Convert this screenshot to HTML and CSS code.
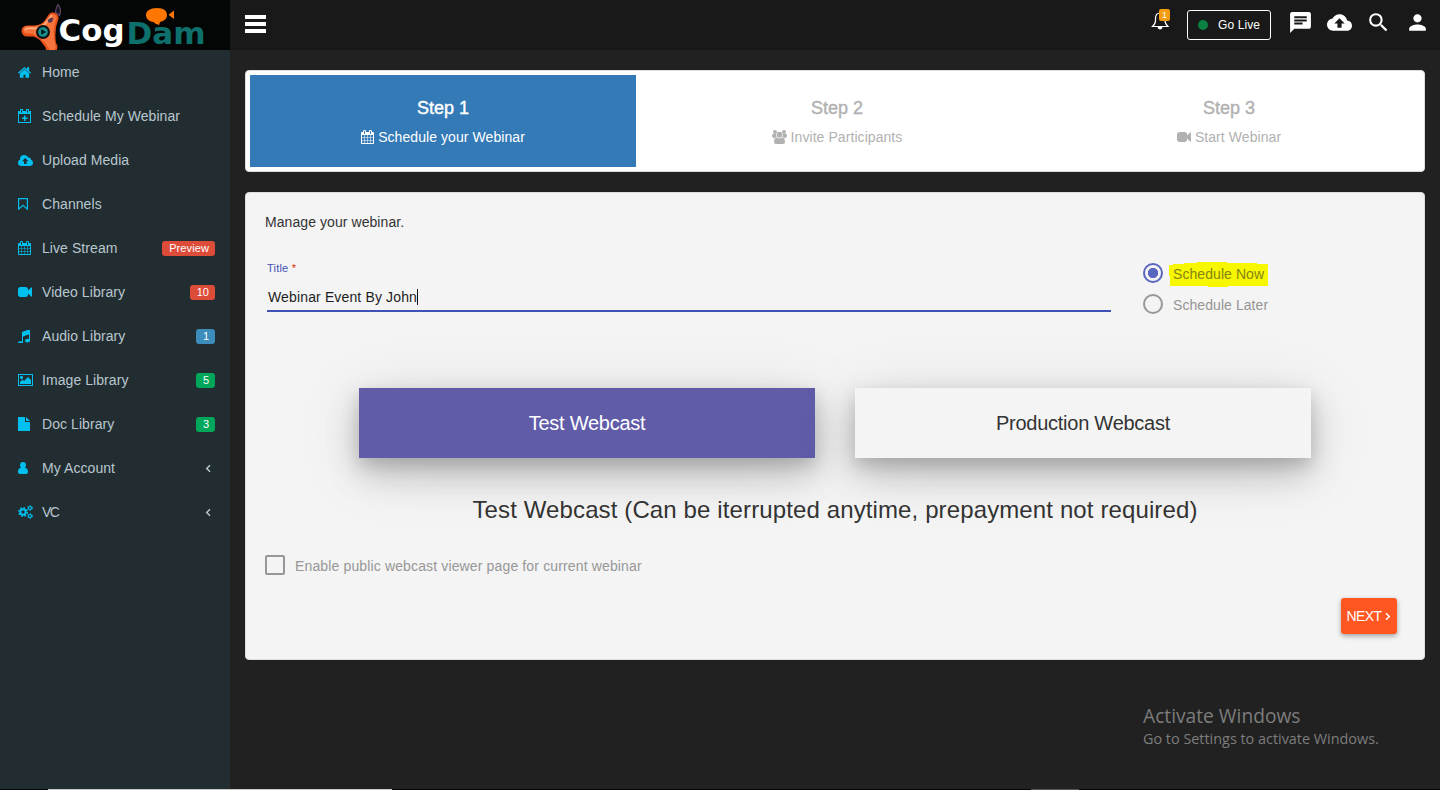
FILE: index.html
```html
<!DOCTYPE html>
<html lang="en">
<head>
<meta charset="utf-8">
<title>CogDam - Schedule Webinar</title>
<link rel="stylesheet" href="styles.css">
</head>
<body>
<svg class="defs" width="0" height="0">
  <symbol id="calendar" viewBox="64 0 1664 1792"><path d="M192 1664h288v-288h-288v288zm352 0h320v-288h-320v288zm-352-352h288v-320h-288v320zm352 0h320v-320h-320v320zm-352-384h288v-288h-288v288zm736 736h320v-288h-320v288zm-384-736h320v-288h-320v288zm768 736h288v-288h-288v288zm-384-352h320v-320h-320v320zm-352-864v-288q0-13-9.500-22.500t-22.500-9.500h-64q-13 0-22.500 9.500t-9.500 22.500v288q0 13 9.500 22.500t22.500 9.500h64q13 0 22.500-9.500t9.500-22.500zm736 864h288v-320h-288v320zm-384-384h320v-288h-320v288zm384 0h288v-288h-288v288zm32-480v-288q0-13-9.500-22.500t-22.500-9.500h-64q-13 0-22.500 9.500t-9.500 22.500v288q0 13 9.500 22.500t22.500 9.500h64q13 0 22.500-9.500t9.500-22.500zm384-64v1280q0 52-38 90t-90 38h-1408q-52 0-90-38t-38-90v-1280q0-52 38-90t90-38h128v-96q0-66 47-113t113-47h64q66 0 113 47t47 113v96h384v-96q0-66 47-113t113-47h64q66 0 113 47t47 113v96h128q52 0 90 38t38 90z"/></symbol>
  <symbol id="video" viewBox="0 128 1792 1536"><path d="M1792 352v1088q0 42-39 59-13 5-25 5-27 0-45-19l-403-403v166q0 119-84.500 203.500t-203.500 84.500h-704q-119 0-203.500-84.500t-84.500-203.500v-704q0-119 84.500-203.500t203.500-84.500h704q119 0 203.500 84.500t84.500 203.500v165l403-402q18-19 45-19 12 0 25 5 39 17 39 59z"/></symbol>
  <symbol id="chevron" viewBox="0 0 6 9"><path d="M5 1.200 1.700 4.500 5 7.800" fill="none" stroke="currentColor" stroke-width="1.500"/></symbol>
  <symbol id="cloud" viewBox="0 0 24 24"><path d="M19.350 10.040C18.670 6.590 15.640 4 12 4 9.110 4 6.600 5.640 5.350 8.040 2.340 8.360 0 10.910 0 14c0 3.310 2.690 6 6 6h13c2.760 0 5-2.240 5-5 0-2.640-2.050-4.780-4.650-4.960zM14 13v4h-4v-4H7l5-5 5 5h-3z"/></symbol>
</svg>
<div class="app">
  <aside class="sidebar">
    <div class="logo">
      <svg width="230" height="50" viewBox="0 0 230 50">
        <path d="M58 4.500q4 5 1.500 11l-4-3q0-4 2.500-8z" fill="#17121f" stroke="#60496b" stroke-width="1.200"/>
        <g fill="none" stroke-linecap="round" stroke-linejoin="round">
          <path d="M27 31h8q10-1 14-7l4-6M35 31q8 3 11 8l6 8M53 18q-5 12-2 29" stroke="#e8501a" stroke-width="11"/>
          <path d="M27 30h8q9-1 13-7l5-5M36 32q7 3 11 8l5 7M53 18q-5 12-1 29" stroke="#f7743c" stroke-width="7"/>
          <path d="M25.500 29.500q2-2 8-1 7 0 12-5l6-8" stroke="#ffae7c" stroke-width="1.800"/>
        </g>
        <path d="M47.500 21q2-4 6-3l-1.500 4q-3 2-4.500-1z" fill="#59394e"/>
        <circle cx="43" cy="32" r="7" fill="#101414"/><circle cx="43" cy="32" r="4.800" fill="#149391"/><path d="M41.200 29.300v5.400l5-2.700z" fill="#061313"/>
        <text class="logo-cog" x="58.500" y="41" textLength="66" lengthAdjust="spacingAndGlyphs">Cog</text>
        <text class="logo-dam" x="126.500" y="43.500" textLength="79" lengthAdjust="spacingAndGlyphs">Dam</text>
        <path d="M157 8c7 0 10 3 10 7 0 3.500-2.500 6-7 7l-1 3q-4-1-5.500-3c-4.500-.7-7.500-3.200-7.500-7 0-4 4-7 11-7zM174 10.500v8.500l-5.500-4.300z" fill="#ff7700"/>
      </svg>
    </div>
    <nav class="menu">
      <a class="item"><svg class="ico" width="13" height="11" viewBox="88 220 1616 1340" preserveAspectRatio="none"><path d="M1472 992v480q0 26-19 45t-45 19h-384v-384h-256v384h-384q-26 0-45-19t-19-45v-480q0-1 .5-3t.5-3l575-474 575 474q1 2 1 6zm223-69l-62 74q-8 9-21 11h-3q-13 0-21-7l-692-577-692 577q-12 8-24 7-13-2-21-11l-62-74q-8-10-7-23.500t11-21.500l719-599q32-26 76-26t76 26l244 204v-195q0-14 9-23t23-9h192q14 0 23 9t9 23v408l219 182q10 8 11 21.500t-7 23.500z"/></svg><span class="name">Home</span></a>
      <a class="item"><svg class="ico" width="13" height="14" viewBox="0 0 13 14"><path fill-rule="evenodd" d="M0 2h2V0h3v2h3V0h3v2h2v12H0zm1 3v8h11V5zM3 1v2.500h1V1zm6 0v2.500h1V1zM6 6.500h1.500V8.500h2V10h-2v2H6v-2H4V8.500h2z"/></svg><span class="name">Schedule My Webinar</span></a>
      <a class="item"><svg class="ico" width="15" height="11" viewBox="0 0 15 11"><path fill-rule="evenodd" d="M3.500 11Q0 11 0 7.700 0 5.300 2 4.400 2 0 6.300 0q3 0 4 2.500 2.400-.4 2.700 2.200Q15 5.300 15 7.700 15 11 11.500 11zM6 9h2.500V6.200h2L7.200 3 4 6.200h2z"/></svg><span class="name">Upload Media</span></a>
      <a class="item"><svg class="ico" width="10" height="12" viewBox="0 0 10 12"><path d="M.6.600h8.800v10.500L5 7.300.6 11.100z" fill="none" stroke="currentColor" stroke-width="1.200"/></svg><span class="name">Channels</span></a>
      <a class="item"><svg class="ico" width="13" height="14"><use href="#calendar"/></svg><span class="name">Live Stream</span><span class="badge red wide">Preview</span></a>
      <a class="item"><svg class="ico" width="14" height="12"><use href="#video"/></svg><span class="name">Video Library</span><span class="badge red">10</span></a>
      <a class="item"><svg class="ico" width="12" height="13" viewBox="128 192 1536 1408" preserveAspectRatio="none"><path d="M1664 224v1120q0 50-34 89t-86 60.500-103.500 32-96.500 10.500-96.500-10.500-103.500-32-86-60.500-34-89 34-89 86-60.500 103.500-32 96.500-10.500q105 0 192 39v-537l-768 237v709q0 50-34 89t-86 60.500-103.500 32-96.500 10.500-96.500-10.500-103.500-32-86-60.500-34-89 34-89 86-60.500 103.500-32 96.500-10.500q105 0 192 39v-967q0-31 19-56.500t49-35.500l832-256q12-4 28-4 40 0 68 28t28 68z"/></svg><span class="name">Audio Library</span><span class="badge blue">1</span></a>
      <a class="item"><svg class="ico" width="15" height="12" viewBox="0 0 15 12"><path fill-rule="evenodd" d="M0 0h15v12H0zM1 1v10h13V1z"/><path d="M2 10V8l2.500-2.500L6 7l4-4 3 3v4z"/><rect x="2" y="2" width="3" height="3" rx="1.300"/></svg><span class="name">Image Library</span><span class="badge green">5</span></a>
      <a class="item"><svg class="ico" width="12" height="14" viewBox="0 0 12 14"><path d="M0 0h7v5h5v9H0z"/><path d="M8 0v4h4z"/></svg><span class="name">Doc Library</span><span class="badge green">3</span></a>
      <a class="item"><svg class="ico" width="10" height="12" viewBox="0 0 10 12"><path d="M5 0c2 0 3 1.300 3 3 0 1-.4 2-.9 2.700C9 6 10 7.500 10 9.700 10 11 9.300 12 8 12H2c-1.300 0-2-1-2-2.300C0 7.500 1 6 2.900 5.700 2.400 5 2 4 2 3c0-1.700 1-3 3-3z"/></svg><span class="name">My Account</span><svg class="chev" width="6" height="9"><use href="#chevron"/></svg></a>
      <a class="item"><svg class="ico" width="15" height="14" viewBox="0 0 15 14"><g fill="none" stroke="currentColor"><circle cx="5" cy="7" r="2.700" stroke-width="1.900"/><circle cx="5" cy="7" r="4.200" stroke-width="1.600" stroke-dasharray="1.650 1.650"/><circle cx="12" cy="3" r="1.500" stroke-width="1.200"/><circle cx="12" cy="3" r="2.400" stroke-width="1" stroke-dasharray="1.250 1.250"/><circle cx="12" cy="11" r="1.500" stroke-width="1.200"/><circle cx="12" cy="11" r="2.400" stroke-width="1" stroke-dasharray="1.250 1.250"/></g></svg><span class="name tight">VC</span><svg class="chev" width="6" height="9"><use href="#chevron"/></svg></a>
    </nav>
  </aside>
  <div class="page">
    <header class="topbar">
      <div class="burger"><i></i><i></i><i></i></div>
      <div class="tools">
        <div class="bell"><svg width="18" height="20" viewBox="0 0 18 20"><path d="M1.500 16.500Q4.500 14 4.500 10.500V8.500C4.500 5 6 3 9 3s5 2 5 5.500v2q0 3.500 3 6z" fill="none" stroke="#fff" stroke-width="1.200"/><path d="M9 3V1.500" stroke="#fff"/><path d="M6.500 17h5a2.500 2.500 0 0 1-5 0z" fill="#fff"/></svg><b class="count">1</b></div>
        <div class="golive"><i class="dot"></i><span>Go Live</span></div>
        <svg class="tool" width="25" height="25" viewBox="0 0 24 24"><path d="M20 2H4c-1.100 0-1.990.9-1.990 2L2 22l4-4h14c1.100 0 2-.9 2-2V4c0-1.100-.9-2-2-2zM6 9h12v2H6V9zm8 5H6v-2h8v2zm4-6H6V6h12v2z"/></svg>
        <svg class="tool" width="25" height="25"><use href="#cloud"/></svg>
        <svg class="tool" width="25" height="25" viewBox="0 0 24 24"><path d="M15.500 14h-.79l-.28-.27A6.471 6.471 0 0 0 16 9.500 6.500 6.500 0 1 0 9.500 16c1.610 0 3.090-.59 4.230-1.570l.27.28v.79l5 4.990L20.490 19l-4.990-5zm-6 0C7.010 14 5 11.990 5 9.500S7.010 5 9.500 5 14 7.010 14 9.500 11.990 14 9.500 14z"/></svg>
        <svg class="tool" width="25" height="25" viewBox="0 0 24 24"><path d="M12 12c2.210 0 4-1.790 4-4s-1.790-4-4-4-4 1.790-4 4 1.790 4 4 4zm0 2c-2.670 0-8 1.340-8 4v2h16v-2c0-2.660-5.330-4-8-4z"/></svg>
      </div>
    </header>
    <main class="content">
      <section class="steps">
        <div class="step active"><h4>Step 1</h4><p><svg width="13" height="14"><use href="#calendar"/></svg><span>Schedule your Webinar</span></p></div>
        <div class="step"><h4>Step 2</h4><p><svg width="15" height="14" viewBox="0 0 15 14"><circle cx="3" cy="2" r="2"/><circle cx="12" cy="2" r="2"/><circle cx="7.500" cy="4.700" r="2.900"/><path d="M0 5q0-1 1-1h3q-.3 2 .8 3.200-2 0-3 1.300Q0 8 0 5zM15 5q0-1-1-1h-3q.3 2-.8 3.200 2 0 3 1.300Q15 8 15 5zM4.500 7.500q3 1.700 6 0Q13 8 13 12q0 2-2 2H4q-2 0-2-2 0-4 2.500-4.500z"/></svg><span>Invite Participants</span></p></div>
        <div class="step"><h4>Step 3</h4><p><svg width="14" height="12"><use href="#video"/></svg><span>Start Webinar</span></p></div>
      </section>
      <section class="panel">
        <p class="lead">Manage your webinar.</p>
        <div class="form">
          <div class="field">
            <label class="label">Title <em>*</em></label>
            <div class="input"><span>Webinar Event By John</span><i class="caret"></i></div>
          </div>
          <div class="radios">
            <div class="radio on"><i class="ring"></i><span class="marked"><svg class="marker" width="99" height="25" viewBox="0 0 99 25"><path d="M0 3h4V2h11V1h13V0h30v1h30v1h11v22H85v-1 1H59v1H39v-1H15v-1 1H1v-10H0z" fill="#f7f700"/></svg><span class="text">Schedule Now</span></span></div>
            <div class="radio"><i class="ring"></i><span>Schedule Later</span></div>
          </div>
        </div>
        <div class="modes">
          <div class="mode selected">Test Webcast</div>
          <div class="mode">Production Webcast</div>
        </div>
        <h3 class="note">Test Webcast (Can be iterrupted anytime, prepayment not required)</h3>
        <div class="check"><i class="box"></i><span>Enable public webcast viewer page for current webinar</span></div>
        <div class="actions"><div class="next"><span>NEXT</span><svg width="6" height="9" viewBox="0 0 6 9"><path d="m1 1.200 3.300 3.300L1 7.800" fill="none" stroke="#fff" stroke-width="1.500"/></svg></div></div>
      </section>
    </main>
  </div>
</div>
<div class="watermark"><div class="wm-title">Activate Windows</div><div class="wm-text">Go to Settings to activate Windows.</div></div>
<div class="taskline"><i class="light"></i><i class="dim"></i></div>
</body>
</html>
```
FILE: styles.css
```css
* { box-sizing: border-box; }
body { margin: 0; background: #212121; font: 14px/20px "Liberation Sans", Arial, sans-serif; letter-spacing: .07px; color: #333; overflow: hidden; }
h3, h4, p { margin: 0; font-weight: 400; }
svg { fill: currentColor; display: block; flex: none; }
.defs { position: absolute; }
.app { display: flex; height: 790px; }

.sidebar { width: 230px; flex: none; background: #222d32; color: #b8c7ce; }
.logo { height: 50px; background: #040606; }
.logo-cog { font: bold 31px "DejaVu Sans", sans-serif; fill: #fff; letter-spacing: 0; }
.logo-dam { font: bold 30px "DejaVu Sans", sans-serif; fill: #0d706c; letter-spacing: 0; }
.item { display: grid; grid-template-columns: 24px 1fr auto; align-items: center; height: 44px; padding: 0 15px 0 18px; }
.ico { color: #00c0ef; }
.tight { letter-spacing: -1.500px; }
.badge { height: 15px; padding: 0 6px 0 7px; border-radius: 3px; font-size: 11px; line-height: 15px; color: #fff; letter-spacing: 0; }
.wide { letter-spacing: .1px; }
.red { background: #dd4b39; }
.blue { background: #3c8dbc; }
.green { background: #00a65a; }
.chev { margin-right: 4px; }

.page { flex: 1; display: flex; flex-direction: column; }
.topbar { height: 50px; background: #191919; display: flex; justify-content: space-between; align-items: flex-start; padding: 0 10px 0 15px; color: #fff; }
.burger { display: grid; gap: 3px; padding-top: 15px; }
.burger i { width: 21px; height: 4px; background: #fff; }
.tools { display: flex; gap: 14px; padding-top: 10px; }
.bell { position: relative; width: 18px; height: 20px; margin-right: 4px; }
.count { position: absolute; left: 8px; top: -1px; width: 11px; height: 12px; border-radius: 2px; background: #f39c12; font: 9px/12px "Liberation Sans", sans-serif; text-align: center; letter-spacing: 0; }
.golive { width: 84px; height: 30px; margin-right: 3px; border: 1px solid #fff; border-radius: 3px; display: flex; align-items: center; gap: 10px; padding-left: 10px; font-size: 12px; letter-spacing: .1px; }
.dot { width: 10px; height: 10px; border-radius: 50%; background: #0a8043; }

.content { padding: 20px 15px; display: grid; gap: 20px; }
.steps { height: 102px; padding: 4px; background: #fff; border: 1px solid #ddd; border-radius: 4px; display: grid; grid-template-columns: 386px 402px 1fr; }
.step { padding-top: 23px; text-align: center; color: #b1b1b1; }
.step h4 { font-size: 18px; line-height: 20px; -webkit-text-stroke: .4px; letter-spacing: 0; }
.step p { display: flex; justify-content: center; align-items: center; gap: 4px; margin-top: 9px; }
.active { background: #337ab7; color: #fff; }

.panel { height: 468px; padding: 19px 19px 0; background: #f4f4f4; border: 1px solid #ddd; border-radius: 4px; }
.form { display: grid; grid-template-columns: 844px 1fr; gap: 32px; padding: 28px 0 0 2px; }
.label { display: block; font-size: 11px; line-height: 16px; color: #3f51b5; letter-spacing: .2px; }
.label em { color: #dd2c00; font-style: normal; }
.input { height: 36px; display: flex; align-items: center; padding: 8px 0 0 1px; border-bottom: 2px solid #3f51b5; color: #1e1e1e; letter-spacing: .14px; }
.caret { width: 1px; height: 16px; background: #111; }
.radios { display: grid; gap: 11px; padding-top: 3px; align-content: start; color: #959595; }
.radio { display: flex; align-items: center; gap: 10px; height: 20px; }
.ring { width: 20px; height: 20px; border: 2px solid #979797; border-radius: 50%; }
.on .ring { border-color: #5967be; background: radial-gradient(circle, #5967be 0 4.800px, transparent 5.500px); }
.marked { position: relative; }
.marker { position: absolute; left: -4px; top: 0; }
.text { position: relative; color: #858316; }
.radio span { line-height: 22px; padding-top: 1px; }
.modes { display: grid; grid-template-columns: 456px 456px; gap: 40px; justify-content: center; margin-top: 74px; }
.mode { height: 70px; background: #f4f4f4; box-shadow: 0 16px 34px rgba(0, 0, 0, .19), 0 7px 16px rgba(0, 0, 0, .14), 0 10px 70px rgba(0, 0, 0, .1); font-size: 20px; line-height: 70px; text-align: center; letter-spacing: -.25px; }
.selected { background: #605ca8; color: #fff; }
.note { margin-top: 38px; font-size: 24px; line-height: 28px; text-align: center; letter-spacing: .12px; position: relative; }
.check { display: flex; align-items: center; gap: 10px; height: 20px; margin-top: 31px; color: #979797; letter-spacing: .14px; }
.check span { padding-top: 2px; }
.box { width: 20px; height: 20px; border: 2px solid #979797; border-radius: 2px; }
.actions { display: flex; justify-content: flex-end; padding: 23px 8px 0 0; }
.next { width: 56px; height: 36px; border-radius: 3px; background: #ff5722; color: #fff; display: flex; align-items: center; justify-content: center; gap: 4px; box-shadow: 0 2px 5px rgba(0, 0, 0, .35); letter-spacing: -.6px; }

.watermark { position: absolute; left: 1143px; top: 703px; color: #7d7d7d; font-family: "Open Sans", sans-serif; letter-spacing: 0; white-space: nowrap; }
.wm-title { font-size: 19.200px; line-height: 26px; }
.wm-text { font-size: 14.400px; line-height: 20px; }
.taskline { position: absolute; left: 0; top: 789px; width: 1440px; height: 1px; background: #050505; display: grid; grid-template-columns: 344px 48px; column-gap: 639px; padding-left: 48px; }
.light { background: #c9c9c9; }
.dim { background: #555; }
```
